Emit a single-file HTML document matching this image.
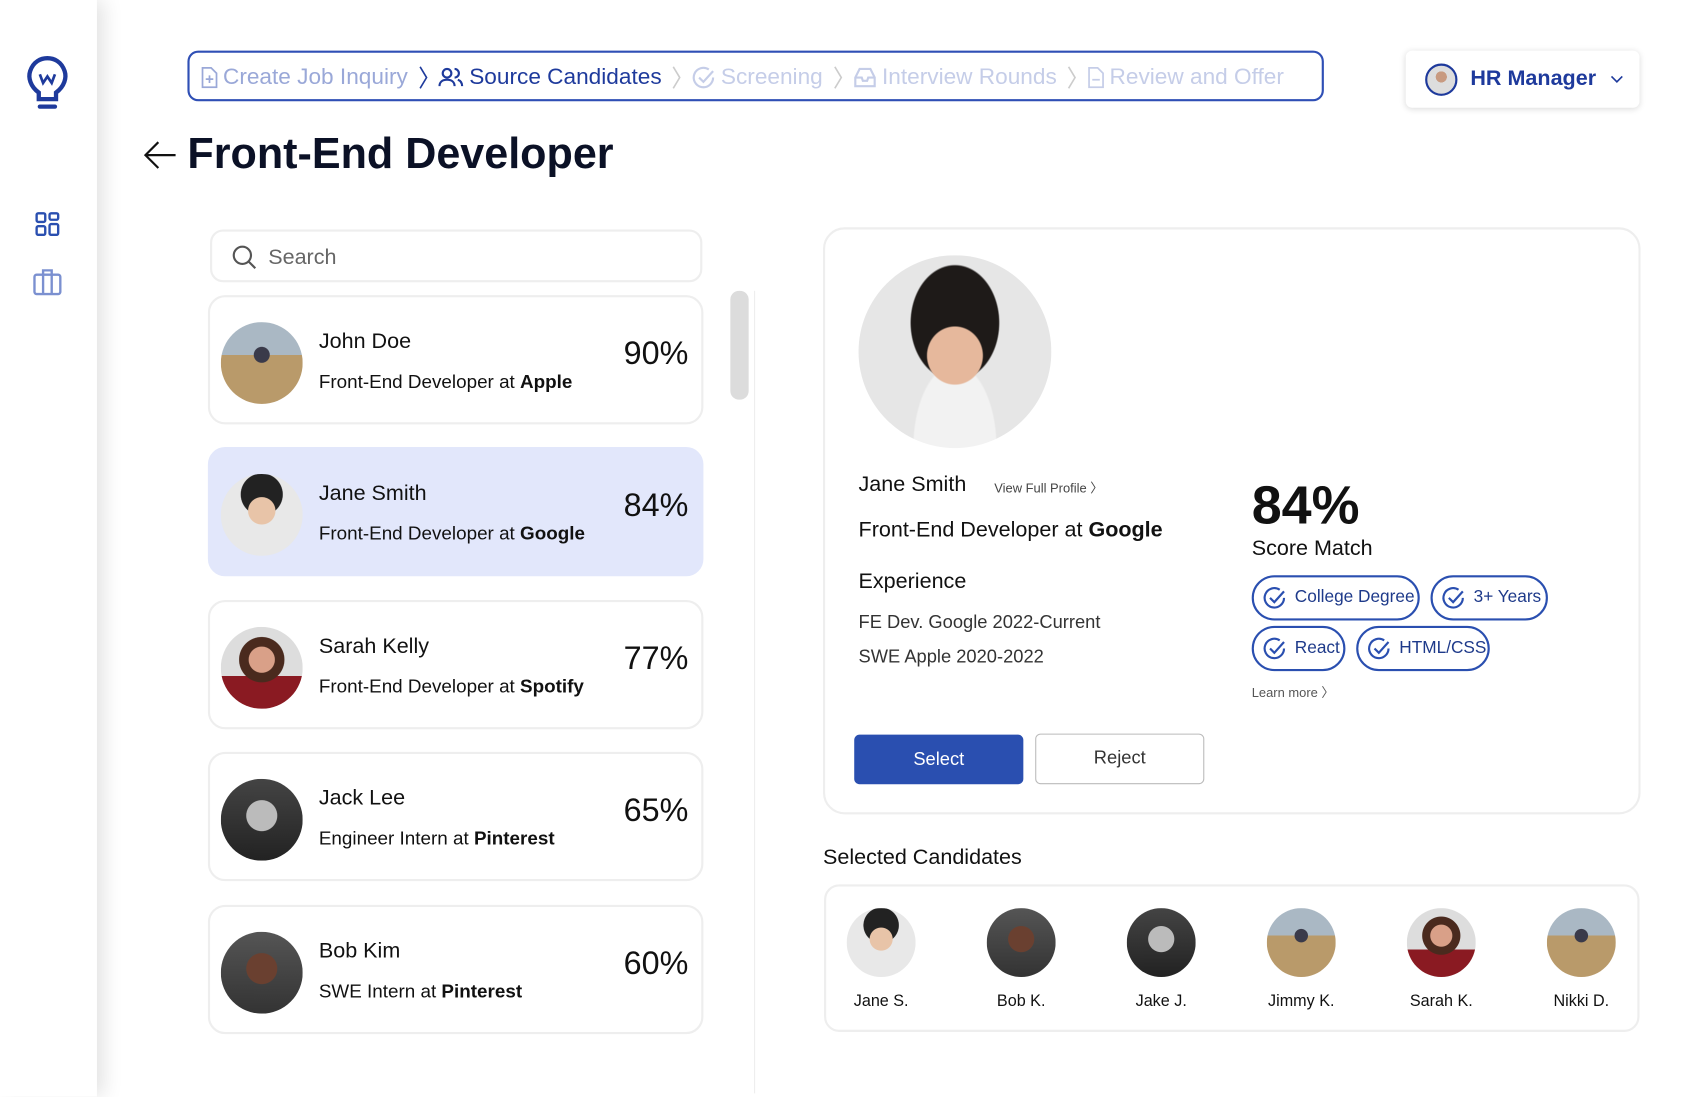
<!DOCTYPE html>
<html><head><meta charset="utf-8"><style>
*{box-sizing:border-box;margin:0;padding:0}
html,body{width:1688px;height:1096px;overflow:hidden;background:#fff;font-family:"Liberation Sans",sans-serif;color:#111}
#w{position:absolute;left:0;top:0;width:1567px;height:1018px;transform:scale(1.0772);transform-origin:0 0}
.a{position:absolute}
.side{left:0;top:0;width:90px;height:1018px;background:#fff;box-shadow:6px 0 18px rgba(0,0,0,.12);z-index:2}
.bc{left:174px;top:47px;width:1055px;height:47px;border:2px solid #2f4fb5;border-radius:10px;display:flex;align-items:center;padding-left:10px;padding-top:2px;font-size:21px;color:#9aa8d8;white-space:nowrap;overflow:hidden}
.bc span{display:flex;align-items:center;gap:5px}
.bc .sep{margin:0 9px}
.hr{left:1305px;top:47px;width:217px;height:53px;border-radius:6px;box-shadow:0 1px 6px rgba(0,0,0,.15);display:flex;align-items:center;padding-left:18px;gap:12px;font-size:20px;font-weight:bold;color:#1e3a9c}
.card{left:193px;width:460px;height:120px;border:2px solid #eee;border-radius:16px;background:#fff}
.card.sel{background:#e2e7fb;border-color:#e2e7fb}
.av{position:absolute;border-radius:50%}
.card .av{left:10px;top:23px;width:76px;height:76px}
.nm{position:absolute;left:101px;top:30px;font-size:20px}
.sb{position:absolute;left:101px;top:68px;font-size:17.5px}
.pc{position:absolute;right:12px;top:36px;font-size:30px}
.chip{position:absolute;height:42px;border:2px solid #2a4fb0;border-radius:21px;display:flex;align-items:center;gap:8px;padding-left:8px;font-size:16px;color:#1e3a8a}
.sc{position:absolute;text-align:center;width:100px;font-size:15px}
.sc .av{position:static;display:block;width:64px;height:64px;margin:0 auto 14px}
.g1{background:radial-gradient(circle at 50% 40%,#3a3a4a 0 12%,transparent 13%),linear-gradient(#aab8c4 0 40%,#b99a6a 40%)}
.g2{background:radial-gradient(circle at 50% 45%,#e8c4a8 0 22%,transparent 23%),radial-gradient(circle at 50% 25%,#222 0 28%,transparent 29%),#e8e8e8}
.g3{background:radial-gradient(circle at 50% 40%,#d9a088 0 20%,transparent 21%),radial-gradient(circle at 50% 40%,#4a2a1e 0 35%,transparent 36%),linear-gradient(#ddd 0 60%,#8a1a22 60%)}
.g4{background:radial-gradient(circle at 50% 45%,#bbb 0 25%,transparent 26%),linear-gradient(#444,#222)}
.g5{background:radial-gradient(circle at 50% 45%,#6a4030 0 25%,transparent 26%),linear-gradient(#555,#333)}
</style></head><body><div id="w">
<div class="a side">
<svg class="a" style="left:24px;top:52px" width="40" height="52" viewBox="0 0 40 52" fill="none" stroke="#1e3a9c" stroke-width="4"><path d="M12 34 C4 28 2 20 4 14 C7 5 14 2 20 2 C26 2 33 5 36 14 C38 20 36 28 28 34 V40 H12 Z"/><path d="M13 47 H27" stroke-linecap="round"/><path d="M13 17 L16 25 L20 19 L24 25 L27 17" stroke-width="2.5"/></svg>
<svg class="a" style="left:32px;top:196px" width="24" height="24" fill="none" stroke="#2a4fb0" stroke-width="2.2"><rect x="2" y="2" width="8" height="8" rx="1.5"/><rect x="14" y="2" width="8" height="6" rx="1.5"/><rect x="2" y="14" width="8" height="8" rx="1.5"/><rect x="14" y="12" width="8" height="10" rx="1.5"/></svg>
<svg class="a" style="left:30px;top:249px" width="28" height="26" fill="none" stroke="#7b90d0" stroke-width="2.2"><rect x="2" y="6" width="24" height="18" rx="2"/><path d="M10 6V2h8v4M10 6v18M18 6v18"/></svg>
</div>
<div class="a bc">
<span><svg width="16" height="20" fill="none" stroke="#9aa8d8" stroke-width="1.6"><path d="M2 1h8l5 5v13H2z"/><path d="M8.5 8v7M5 11.5h7"/></svg>Create Job Inquiry</span><span class="sep"><svg width="10" height="22" fill="none" stroke="#1e3a9c" stroke-width="1.5"><path d="M2 1l6 10-6 10"/></svg></span>
<span style="color:#1e3a9c"><svg width="24" height="20" fill="none" stroke="#1e3a9c" stroke-width="2"><circle cx="8" cy="6" r="4"/><path d="M1 18c0-4 3-6 7-6s7 2 7 6M15 2a4 4 0 010 8M18 12c3 1 4 3 4 6"/></svg>Source Candidates</span><span class="sep"><svg width="10" height="22" fill="none" stroke="#ccc" stroke-width="1.5"><path d="M2 1l6 10-6 10"/></svg></span>
<span style="color:#c5cde8"><svg width="22" height="22" fill="none" stroke="#c5cde8" stroke-width="2"><path d="M20 11a9 9 0 11-4-7.5"/><path d="M7 11l4 4 9-10"/></svg>Screening</span><span class="sep"><svg width="10" height="22" fill="none" stroke="#ccc" stroke-width="1.5"><path d="M2 1l6 10-6 10"/></svg></span>
<span style="color:#c5cde8"><svg width="22" height="20" fill="none" stroke="#c5cde8" stroke-width="2"><path d="M2 10l4-8h10l4 8v8H2z"/><path d="M2 10h6l1 3h4l1-3h6"/></svg>Interview Rounds</span><span class="sep"><svg width="10" height="22" fill="none" stroke="#ccc" stroke-width="1.5"><path d="M2 1l6 10-6 10"/></svg></span>
<span style="color:#c5cde8"><svg width="16" height="20" fill="none" stroke="#c5cde8" stroke-width="1.6"><path d="M2 1h8l5 5v13H2z"/><path d="M5 12h7"/></svg>Review and Offer</span>
</div>
<div class="a hr"><div class="av g4" style="position:static;width:30px;height:30px;border:2px solid #1e3a9c;background:radial-gradient(circle at 50% 40%,#c89a80 0 25%,transparent 26%),#ddd"></div>HR Manager <svg width="14" height="10" fill="none" stroke="#1e3a9c" stroke-width="1.5"><path d="M2 2l5 5 5-5"/></svg></div>
<svg class="a" style="left:133px;top:130px" width="32" height="28" fill="none" stroke="#111" stroke-width="2"><path d="M30 14H2M14 2L2 14l12 12"/></svg>
<div class="a" style="left:174px;top:121px;font-size:40px;font-weight:bold;color:#0b1126">Front-End Developer</div>
<div class="a" style="left:195px;top:213px;width:457px;height:49px;border:2px solid #eee;border-radius:12px;font-size:20px;color:#666;padding:13px 0 0 52px">Search
<svg class="a" style="left:18px;top:12px" width="24" height="24" fill="none" stroke="#555" stroke-width="2"><circle cx="10" cy="10" r="8"/><path d="M16 16l6 6"/></svg></div>
<div class="a card" style="top:274px"><div class="av g1"></div><div class="nm">John Doe</div><div class="sb">Front-End Developer at <b>Apple</b></div><div class="pc">90%</div></div>
<div class="a card sel" style="top:415px"><div class="av g2"></div><div class="nm">Jane Smith</div><div class="sb">Front-End Developer at <b>Google</b></div><div class="pc">84%</div></div>
<div class="a card" style="top:557px"><div class="av g3"></div><div class="nm">Sarah Kelly</div><div class="sb">Front-End Developer at <b>Spotify</b></div><div class="pc">77%</div></div>
<div class="a card" style="top:698px"><div class="av g4"></div><div class="nm">Jack Lee</div><div class="sb">Engineer Intern at <b>Pinterest</b></div><div class="pc">65%</div></div>
<div class="a card" style="top:840px"><div class="av g5"></div><div class="nm">Bob Kim</div><div class="sb">SWE Intern at <b>Pinterest</b></div><div class="pc">60%</div></div>
<div class="a" style="left:678px;top:270px;width:17px;height:101px;background:#dcdcdc;border-radius:8px"></div>
<div class="a" style="left:700px;top:270px;width:1px;height:745px;background:#eee"></div>
<div class="a" style="left:764px;top:211px;width:759px;height:545px;border:2px solid #eee;border-radius:20px"></div>
<div class="av" style="left:797px;top:237px;width:179px;height:179px;background:radial-gradient(ellipse at 50% 52%,#e6b89c 0 20%,transparent 21%),radial-gradient(ellipse at 50% 35%,#1e1a18 0 32%,transparent 33%),radial-gradient(ellipse at 50% 100%,#f2f2f2 0 30%,transparent 31%),#e6e6e6"></div>
<div class="a" style="left:797px;top:439px;font-size:20px">Jane Smith</div>
<div class="a" style="left:923px;top:444px;font-size:12px;color:#444">View Full Profile 〉</div>
<div class="a" style="left:797px;top:481px;font-size:20px">Front-End Developer at <b>Google</b></div>
<div class="a" style="left:797px;top:529px;font-size:20px">Experience</div>
<div class="a" style="left:797px;top:562px;font-size:17px;color:#333;line-height:32px">FE Dev. Google 2022-Current<br>SWE Apple 2020-2022</div>
<div class="a" style="left:1162px;top:440px;font-size:50px;font-weight:bold">84%</div>
<div class="a" style="left:1162px;top:498px;font-size:20px">Score Match</div>
<div class="chip" style="left:1162px;top:534px;width:156px"><svg width="22" height="22" fill="none" stroke="#2a4fb0" stroke-width="2"><path d="M20 11a9 9 0 11-4-7.5"/><path d="M7 11l4 4 9-10"/></svg>College Degree</div>
<div class="chip" style="left:1328px;top:534px;width:109px"><svg width="22" height="22" fill="none" stroke="#2a4fb0" stroke-width="2"><path d="M20 11a9 9 0 11-4-7.5"/><path d="M7 11l4 4 9-10"/></svg>3+ Years</div>
<div class="chip" style="left:1162px;top:581px;width:87px"><svg width="22" height="22" fill="none" stroke="#2a4fb0" stroke-width="2"><path d="M20 11a9 9 0 11-4-7.5"/><path d="M7 11l4 4 9-10"/></svg>React</div>
<div class="chip" style="left:1259px;top:581px;width:124px"><svg width="22" height="22" fill="none" stroke="#2a4fb0" stroke-width="2"><path d="M20 11a9 9 0 11-4-7.5"/><path d="M7 11l4 4 9-10"/></svg>HTML/CSS</div>
<div class="a" style="left:1162px;top:634px;font-size:12px;color:#555">Learn more 〉</div>
<div class="a" style="left:793px;top:682px;width:157px;height:46px;background:#2a4fb0;border-radius:5px;color:#fff;font-size:17px;text-align:center;line-height:46px">Select</div>
<div class="a" style="left:961px;top:681px;width:157px;height:47px;border:1.5px solid #bbb;border-radius:5px;color:#333;font-size:17px;text-align:center;line-height:44px">Reject</div>
<div class="a" style="left:764px;top:785px;font-size:20px">Selected Candidates</div>
<div class="a" style="left:765px;top:821px;width:757px;height:137px;border:2px solid #eee;border-radius:14px"></div>
<div class="sc" style="left:768px;top:843px"><div class="av g2"></div>Jane S.</div>
<div class="sc" style="left:898px;top:843px"><div class="av g5"></div>Bob K.</div>
<div class="sc" style="left:1028px;top:843px"><div class="av g4"></div>Jake J.</div>
<div class="sc" style="left:1158px;top:843px"><div class="av g1"></div>Jimmy K.</div>
<div class="sc" style="left:1288px;top:843px"><div class="av g3"></div>Sarah K.</div>
<div class="sc" style="left:1418px;top:843px"><div class="av g1"></div>Nikki D.</div>
</div></body></html>
